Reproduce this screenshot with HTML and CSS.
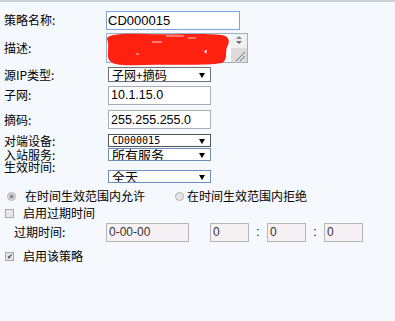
FILE: index.html
```html
<!DOCTYPE html>
<html lang="zh-CN">
<head>
  <meta charset="UTF-8">
  <title>策略编辑</title>
  <link rel="stylesheet" href="styles.css">
</head>
<body>
  <div class="form">
    <div class="row r-name">
      <label class="lbl">策略名称:</label>
      <input class="txt name" type="text" value="CD000015">
    </div>

    <div class="row r-desc">
      <label class="lbl">描述:</label>
      <div class="memo">
        <textarea class="memo-text"></textarea>
        <div class="sb">
          <div class="sb-arrows">
            <svg width="10" height="12" viewBox="0 0 10 12"><path d="M2 5 L5 2 L8 5 Z" fill="#8a8a8a"/><path d="M2 7 L8 7 L5 10 Z" fill="#6a6a6a"/></svg>
          </div>
          <div class="sb-grip">
            <svg width="16" height="14" viewBox="0 0 16 14"><path d="M5 13 L14 4 M9 13 L14 8" stroke="#6f6f6f" stroke-width="1"/></svg>
          </div>
        </div>
        <!-- 涂抹遮挡 -->
        <svg class="scribble" width="126" height="33" viewBox="0 0 126 33">
          <path d="M3 6 C2 1 20 0 40 1 C70 2 100 0 118 2 C126 3 126 10 123 14 C121 20 124 27 118 30 C100 33 70 31 40 32 C20 33 8 32 5 27 C2 21 6 14 3 6 Z" fill="#ff2211"/>
          <path d="M62 3 H80 M84 5 H92 M48 9 H58 M32 21 H35" stroke="#fff" stroke-width="1" opacity="0.8"/>
          <path d="M100 18 L103 17 L102 21 Z" fill="#fff"/>
        </svg>
      </div>
    </div>

    <div class="row r-srcip">
      <label class="lbl">源IP类型:</label>
      <span class="sel"><select class="dd dd-srcip"><option>子网+摘码</option></select></span>
    </div>

    <div class="row r-subnet">
      <label class="lbl">子网:</label>
      <input class="txt ip" type="text" value="10.1.15.0">
    </div>

    <div class="row r-mask">
      <label class="lbl">摘码:</label>
      <input class="txt ip" type="text" value="255.255.255.0">
    </div>

    <div class="row r-peer">
      <label class="lbl">对端设备:</label>
      <span class="sel"><select class="dd dd-peer"><option>CD000015</option></select></span>
    </div>

    <div class="row r-inbound">
      <label class="lbl">入站服务:</label>
      <span class="sel"><select class="dd dd-blue"><option>所有服务</option></select></span>
    </div>

    <div class="row r-time">
      <label class="lbl">生效时间:</label>
      <span class="sel sel-low"><select class="dd dd-blue"><option>全天</option></select></span>
    </div>

    <div class="row r-radio">
      <span class="radio on"></span><span class="opt">在时间生效范围内允许</span>
      <span class="radio radio-2"></span><span class="opt opt-2">在时间生效范围内拒绝</span>
    </div>

    <div class="row r-check">
      <span class="check"></span><span class="opt">启用过期时间</span>
    </div>

    <div class="row r-expire">
      <label class="lbl lbl-sub">过期时间:</label>
      <input class="txt off date" type="text" value="0-00-00" disabled>
      <input class="txt off num first" type="text" value="0" disabled>
      <span class="colon">:</span>
      <input class="txt off num" type="text" value="0" disabled>
      <span class="colon">:</span>
      <input class="txt off num" type="text" value="0" disabled>
    </div>

    <div class="row r-enable">
      <span class="check on">&#10004;</span><span class="opt opt-en">启用该策略</span>
    </div>
  </div>
</body>
</html>
```

FILE: styles.css
```css
body {
  margin: 0;
  background: #f5f8fd;
  border-top: 2px solid #cdd1d8;
  color: #000;
  font-family: "Noto Sans CJK SC", sans-serif;
  font-size: 12px;
}
.form {
  padding-top: 7px;
}
.row {
  display: flex;
  align-items: center;
}
.lbl {
  width: 102px;
  margin-left: 4px;
  line-height: 12px;
}

/* 行高 */
.r-name { height: 22px; }
.r-desc { height: 34px; }
.r-srcip { height: 19px; }
.r-subnet { height: 22px; }
.r-mask { height: 27px; }
.r-peer { height: 15px; }
.r-inbound { height: 13px; }
.r-time { height: 23px; align-items: flex-start; }
.r-radio { height: 24px; }
.r-check { height: 10px; }
.r-expire { height: 28px; }
.r-enable { height: 20px; }

.txt {
  box-sizing: border-box;
  height: 19px;
  padding: 0 2px;
  border: 1px solid #a9adb3;
  background: #fff;
  font-family: "Liberation Sans", Arial, sans-serif;
  font-size: 12px;
  color: #000;
  outline: none;
}
.name {
  width: 134px;
  border-color: #7ba5e0;
  font-size: 13px;
  padding-left: 1px;
}
.ip {
  width: 103px;
  margin-left: 2px;
  font-size: 12.5px;
}

/* 描述 */
.memo {
  position: relative;
  box-sizing: border-box;
  width: 142px;
  height: 30px;
  display: flex;
  border: 1px solid #9cb0c9;
  background: #fff;
}
.memo-text {
  flex: 1;
  border: none;
  resize: none;
  margin: 0;
  padding: 0;
  outline: none;
}
.sb {
  width: 16px;
  display: flex;
  flex-direction: column;
}
.sb-arrows {
  height: 14px;
  background: #f0f0f0;
  display: flex;
  justify-content: center;
}
.sb-grip {
  flex: 1;
  background: #dcdcdc;
  display: flex;
  align-items: flex-end;
}
.sb-grip svg {
  display: block;
}
.scribble {
  position: absolute;
  left: -3px;
  top: -1px;
}

/* 下拉框 */
.sel {
  position: relative;
  display: inline-block;
  margin-left: 2px;
}
.sel::after {
  content: "";
  position: absolute;
  right: 6px;
  top: 50%;
  margin-top: -2px;
  border-left: 3.5px solid transparent;
  border-right: 3.5px solid transparent;
  border-top: 5px solid #000;
  pointer-events: none;
}
.sel-low {
  margin-top: 9px;
}
.dd {
  display: block;
  box-sizing: border-box;
  appearance: none;
  width: 103px;
  height: 13px;
  margin: 0;
  padding: 0 0 0 3px;
  border: 1px solid #6f6f6f;
  border-radius: 0;
  background: #fff;
  font-family: "Noto Sans CJK SC", sans-serif;
  font-size: 12px;
  line-height: 11px;
  color: #000;
}
.dd-srcip {
  height: 15px;
  line-height: 13px;
}
.dd-peer {
  font-family: "DejaVu Sans Mono", monospace;
  font-size: 10px;
  border-color: #555;
}
.dd-blue {
  border-color: #6b8db8;
  font-size: 13px;
}

/* 单选 / 复选 */
.radio {
  box-sizing: border-box;
  width: 9px;
  height: 9px;
  margin-left: 7px;
  border: 1px solid #b0b0b0;
  border-radius: 50%;
  background: #e4e4e4;
}
.radio.on {
  background: radial-gradient(circle, #8c8c8c 0, #8c8c8c 1.5px, #e0e0e0 2.5px);
}
.radio-2 {
  margin-left: 30px;
}
.opt {
  margin-left: 9px;
  line-height: 14px;
}
.opt-2 {
  margin-left: 3px;
}
.check {
  box-sizing: border-box;
  width: 9px;
  height: 9px;
  margin-left: 5px;
  border: 1px solid #a9a9a9;
  background: #e6e6e6;
  font-size: 7px;
  line-height: 7px;
  text-align: center;
  color: #333;
}
.opt-en {
  margin-left: 9px;
}

/* 过期时间 */
.lbl-sub {
  width: 92px;
  margin-left: 14px;
}
.off {
  height: 19px;
  border-color: #b6b6b6;
  background: #f7f1f5;
  color: #333;
}
.date {
  width: 83px;
}
.num {
  width: 39px;
}
.first {
  margin-left: 21px;
}
.colon {
  width: 18px;
  text-align: center;
  font-family: "Liberation Sans", Arial, sans-serif;
}
```
